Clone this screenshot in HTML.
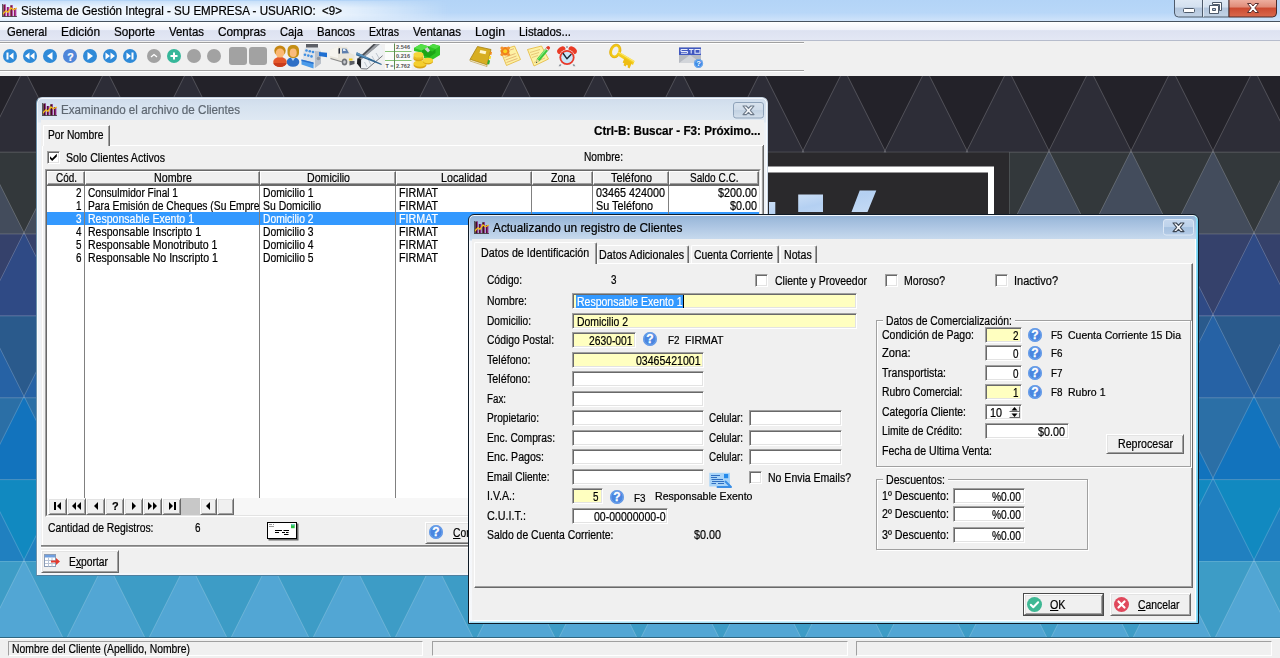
<!DOCTYPE html>
<html lang="es"><head><meta charset="utf-8"><title>Sistema de Gestión Integral</title>
<style>
html,body{margin:0;padding:0;background:#f0f0f0;overflow:hidden}
#root{position:relative;width:1280px;height:658px;overflow:hidden;background:#f0f0f0;font-family:"Liberation Sans",sans-serif;color:#000}
#root div{position:absolute;box-sizing:border-box}
#root svg{position:absolute;display:block;overflow:visible}
.t{-webkit-text-stroke:.22px currentColor;position:absolute;white-space:pre;transform-origin:0 0;font-family:"Liberation Sans",sans-serif;color:#000}
.t u{text-decoration:underline;text-underline-offset:1px}
.sunk{border:1px solid;border-color:#a0a0a0 #fff #fff #a0a0a0;box-shadow:inset 1px 1px 0 #696969,inset -1px -1px 0 #e3e3e3;background:#fff}
.yel{background:#ffffc0}
.btn{border:1px solid;border-color:#fff #696969 #696969 #fff;box-shadow:inset 1px 1px 0 #e3e3e3,inset -1px -1px 0 #a0a0a0;background:#f0f0f0}
.chk{border:1px solid;border-color:#a0a0a0 #fff #fff #a0a0a0;box-shadow:inset 1px 1px 0 #696969,inset -1px -1px 0 #e3e3e3;background:#fff}
.hdr{border:1px solid;border-color:#fff #696969 #696969 #fff;box-shadow:inset -1px -1px 0 #a0a0a0;background:#f0f0f0}
.grp{border:1px solid #a0a0a0;box-shadow:1px 1px 0 #fff,inset 1px 1px 0 #fff}

</style></head><body>
<div id="root">
<svg width="1280" height="562" viewBox="0 76 1280 562" style="left:0;top:76px"><rect x="0" y="76" width="1280" height="562" fill="#232229"/><rect x="0" y="70.5" width="1280" height="82.3" fill="#232229"/><clipPath id="bc0"><rect x="0" y="70.5" width="1280" height="81.8"/></clipPath><path d="M-58.0 68.9L-16.2 152.3H-99.8ZM24.0 68.9L65.8 152.3H-17.8ZM106.0 68.9L147.8 152.3H64.2ZM188.0 68.9L229.8 152.3H146.2ZM270.0 68.9L311.8 152.3H228.2ZM352.0 68.9L393.8 152.3H310.2ZM434.0 68.9L475.8 152.3H392.2ZM516.0 68.9L557.8 152.3H474.2ZM598.0 68.9L639.8 152.3H556.2ZM680.0 68.9L721.8 152.3H638.2ZM762.0 68.9L803.8 152.3H720.2ZM844.0 68.9L885.8 152.3H802.2ZM926.0 68.9L967.8 152.3H884.2ZM1008.0 68.9L1049.8 152.3H966.2ZM1090.0 68.9L1131.8 152.3H1048.2ZM1172.0 68.9L1213.8 152.3H1130.2ZM1254.0 68.9L1295.8 152.3H1212.2Z" fill="#2d2d37" clip-path="url(#bc0)"/><rect x="0" y="152.3" width="1280" height="82.3" fill="#33383b"/><clipPath id="bc1"><rect x="0" y="152.3" width="1280" height="81.8"/></clipPath><path d="M-17.0 150.7L24.8 234.2H-58.8ZM65.0 150.7L106.8 234.2H23.2ZM147.0 150.7L188.8 234.2H105.2ZM229.0 150.7L270.8 234.2H187.2ZM311.0 150.7L352.8 234.2H269.2ZM393.0 150.7L434.8 234.2H351.2ZM475.0 150.7L516.8 234.2H433.2ZM557.0 150.7L598.8 234.2H515.2ZM639.0 150.7L680.8 234.2H597.2ZM721.0 150.7L762.8 234.2H679.2ZM803.0 150.7L844.8 234.2H761.2ZM885.0 150.7L926.8 234.2H843.2ZM967.0 150.7L1008.8 234.2H925.2ZM1049.0 150.7L1090.8 234.2H1007.2ZM1131.0 150.7L1172.8 234.2H1089.2ZM1213.0 150.7L1254.8 234.2H1171.2ZM1295.0 150.7L1336.8 234.2H1253.2Z" fill="#434c5c" clip-path="url(#bc1)"/><rect x="0" y="234.1" width="1280" height="82.3" fill="#35416b"/><clipPath id="bc2"><rect x="0" y="234.1" width="1280" height="81.8"/></clipPath><path d="M-58.0 232.5L-16.2 316.0H-99.8ZM24.0 232.5L65.8 316.0H-17.8ZM106.0 232.5L147.8 316.0H64.2ZM188.0 232.5L229.8 316.0H146.2ZM270.0 232.5L311.8 316.0H228.2ZM352.0 232.5L393.8 316.0H310.2ZM434.0 232.5L475.8 316.0H392.2ZM516.0 232.5L557.8 316.0H474.2ZM598.0 232.5L639.8 316.0H556.2ZM680.0 232.5L721.8 316.0H638.2ZM762.0 232.5L803.8 316.0H720.2ZM844.0 232.5L885.8 316.0H802.2ZM926.0 232.5L967.8 316.0H884.2ZM1008.0 232.5L1049.8 316.0H966.2ZM1090.0 232.5L1131.8 316.0H1048.2ZM1172.0 232.5L1213.8 316.0H1130.2ZM1254.0 232.5L1295.8 316.0H1212.2Z" fill="#2f4a85" clip-path="url(#bc2)"/><rect x="0" y="316.0" width="1280" height="82.3" fill="#2a5a8c"/><clipPath id="bc3"><rect x="0" y="316.0" width="1280" height="81.8"/></clipPath><path d="M-17.0 314.4L24.8 397.9H-58.8ZM65.0 314.4L106.8 397.9H23.2ZM147.0 314.4L188.8 397.9H105.2ZM229.0 314.4L270.8 397.9H187.2ZM311.0 314.4L352.8 397.9H269.2ZM393.0 314.4L434.8 397.9H351.2ZM475.0 314.4L516.8 397.9H433.2ZM557.0 314.4L598.8 397.9H515.2ZM639.0 314.4L680.8 397.9H597.2ZM721.0 314.4L762.8 397.9H679.2ZM803.0 314.4L844.8 397.9H761.2ZM885.0 314.4L926.8 397.9H843.2ZM967.0 314.4L1008.8 397.9H925.2ZM1049.0 314.4L1090.8 397.9H1007.2ZM1131.0 314.4L1172.8 397.9H1089.2ZM1213.0 314.4L1254.8 397.9H1171.2ZM1295.0 314.4L1336.8 397.9H1253.2Z" fill="#2662a5" clip-path="url(#bc3)"/><rect x="0" y="397.8" width="1280" height="82.3" fill="#2b6fa6"/><clipPath id="bc4"><rect x="0" y="397.8" width="1280" height="81.8"/></clipPath><path d="M-58.0 396.2L-16.2 479.7H-99.8ZM24.0 396.2L65.8 479.7H-17.8ZM106.0 396.2L147.8 479.7H64.2ZM188.0 396.2L229.8 479.7H146.2ZM270.0 396.2L311.8 479.7H228.2ZM352.0 396.2L393.8 479.7H310.2ZM434.0 396.2L475.8 479.7H392.2ZM516.0 396.2L557.8 479.7H474.2ZM598.0 396.2L639.8 479.7H556.2ZM680.0 396.2L721.8 479.7H638.2ZM762.0 396.2L803.8 479.7H720.2ZM844.0 396.2L885.8 479.7H802.2ZM926.0 396.2L967.8 479.7H884.2ZM1008.0 396.2L1049.8 479.7H966.2ZM1090.0 396.2L1131.8 479.7H1048.2ZM1172.0 396.2L1213.8 479.7H1130.2ZM1254.0 396.2L1295.8 479.7H1212.2Z" fill="#1273bd" clip-path="url(#bc4)"/><rect x="0" y="479.7" width="1280" height="82.3" fill="#1189c0"/><clipPath id="bc5"><rect x="0" y="479.7" width="1280" height="81.8"/></clipPath><path d="M-17.0 478.1L24.8 561.5H-58.8ZM65.0 478.1L106.8 561.5H23.2ZM147.0 478.1L188.8 561.5H105.2ZM229.0 478.1L270.8 561.5H187.2ZM311.0 478.1L352.8 561.5H269.2ZM393.0 478.1L434.8 561.5H351.2ZM475.0 478.1L516.8 561.5H433.2ZM557.0 478.1L598.8 561.5H515.2ZM639.0 478.1L680.8 561.5H597.2ZM721.0 478.1L762.8 561.5H679.2ZM803.0 478.1L844.8 561.5H761.2ZM885.0 478.1L926.8 561.5H843.2ZM967.0 478.1L1008.8 561.5H925.2ZM1049.0 478.1L1090.8 561.5H1007.2ZM1131.0 478.1L1172.8 561.5H1089.2ZM1213.0 478.1L1254.8 561.5H1171.2ZM1295.0 478.1L1336.8 561.5H1253.2Z" fill="#2080c0" clip-path="url(#bc5)"/><rect x="0" y="561.5" width="1280" height="82.3" fill="#3d9cc6"/><clipPath id="bc6"><rect x="0" y="561.5" width="1280" height="81.8"/></clipPath><path d="M-58.0 559.9L-16.2 643.4H-99.8ZM24.0 559.9L65.8 643.4H-17.8ZM106.0 559.9L147.8 643.4H64.2ZM188.0 559.9L229.8 643.4H146.2ZM270.0 559.9L311.8 643.4H228.2ZM352.0 559.9L393.8 643.4H310.2ZM434.0 559.9L475.8 643.4H392.2ZM516.0 559.9L557.8 643.4H474.2ZM598.0 559.9L639.8 643.4H556.2ZM680.0 559.9L721.8 643.4H638.2ZM762.0 559.9L803.8 643.4H720.2ZM844.0 559.9L885.8 643.4H802.2ZM926.0 559.9L967.8 643.4H884.2ZM1008.0 559.9L1049.8 643.4H966.2ZM1090.0 559.9L1131.8 643.4H1048.2ZM1172.0 559.9L1213.8 643.4H1130.2ZM1254.0 559.9L1295.8 643.4H1212.2Z" fill="#52a6d4" clip-path="url(#bc6)"/><path d="M-58.0 68.9L-16.2 152.3H-99.8ZM24.0 68.9L65.8 152.3H-17.8ZM106.0 68.9L147.8 152.3H64.2ZM188.0 68.9L229.8 152.3H146.2ZM270.0 68.9L311.8 152.3H228.2ZM352.0 68.9L393.8 152.3H310.2ZM434.0 68.9L475.8 152.3H392.2ZM516.0 68.9L557.8 152.3H474.2ZM598.0 68.9L639.8 152.3H556.2ZM680.0 68.9L721.8 152.3H638.2ZM762.0 68.9L803.8 152.3H720.2ZM844.0 68.9L885.8 152.3H802.2ZM926.0 68.9L967.8 152.3H884.2ZM1008.0 68.9L1049.8 152.3H966.2ZM1090.0 68.9L1131.8 152.3H1048.2ZM1172.0 68.9L1213.8 152.3H1130.2ZM1254.0 68.9L1295.8 152.3H1212.2Z" fill="none" stroke="#fff" stroke-opacity=".2" stroke-width="1" clip-path="url(#bc0)"/><path d="M-17.0 150.7L24.8 234.2H-58.8ZM65.0 150.7L106.8 234.2H23.2ZM147.0 150.7L188.8 234.2H105.2ZM229.0 150.7L270.8 234.2H187.2ZM311.0 150.7L352.8 234.2H269.2ZM393.0 150.7L434.8 234.2H351.2ZM475.0 150.7L516.8 234.2H433.2ZM557.0 150.7L598.8 234.2H515.2ZM639.0 150.7L680.8 234.2H597.2ZM721.0 150.7L762.8 234.2H679.2ZM803.0 150.7L844.8 234.2H761.2ZM885.0 150.7L926.8 234.2H843.2ZM967.0 150.7L1008.8 234.2H925.2ZM1049.0 150.7L1090.8 234.2H1007.2ZM1131.0 150.7L1172.8 234.2H1089.2ZM1213.0 150.7L1254.8 234.2H1171.2ZM1295.0 150.7L1336.8 234.2H1253.2Z" fill="none" stroke="#fff" stroke-opacity=".2" stroke-width="1" clip-path="url(#bc1)"/><path d="M-58.0 232.5L-16.2 316.0H-99.8ZM24.0 232.5L65.8 316.0H-17.8ZM106.0 232.5L147.8 316.0H64.2ZM188.0 232.5L229.8 316.0H146.2ZM270.0 232.5L311.8 316.0H228.2ZM352.0 232.5L393.8 316.0H310.2ZM434.0 232.5L475.8 316.0H392.2ZM516.0 232.5L557.8 316.0H474.2ZM598.0 232.5L639.8 316.0H556.2ZM680.0 232.5L721.8 316.0H638.2ZM762.0 232.5L803.8 316.0H720.2ZM844.0 232.5L885.8 316.0H802.2ZM926.0 232.5L967.8 316.0H884.2ZM1008.0 232.5L1049.8 316.0H966.2ZM1090.0 232.5L1131.8 316.0H1048.2ZM1172.0 232.5L1213.8 316.0H1130.2ZM1254.0 232.5L1295.8 316.0H1212.2Z" fill="none" stroke="#fff" stroke-opacity=".2" stroke-width="1" clip-path="url(#bc2)"/><path d="M-17.0 314.4L24.8 397.9H-58.8ZM65.0 314.4L106.8 397.9H23.2ZM147.0 314.4L188.8 397.9H105.2ZM229.0 314.4L270.8 397.9H187.2ZM311.0 314.4L352.8 397.9H269.2ZM393.0 314.4L434.8 397.9H351.2ZM475.0 314.4L516.8 397.9H433.2ZM557.0 314.4L598.8 397.9H515.2ZM639.0 314.4L680.8 397.9H597.2ZM721.0 314.4L762.8 397.9H679.2ZM803.0 314.4L844.8 397.9H761.2ZM885.0 314.4L926.8 397.9H843.2ZM967.0 314.4L1008.8 397.9H925.2ZM1049.0 314.4L1090.8 397.9H1007.2ZM1131.0 314.4L1172.8 397.9H1089.2ZM1213.0 314.4L1254.8 397.9H1171.2ZM1295.0 314.4L1336.8 397.9H1253.2Z" fill="none" stroke="#fff" stroke-opacity=".2" stroke-width="1" clip-path="url(#bc3)"/><path d="M-58.0 396.2L-16.2 479.7H-99.8ZM24.0 396.2L65.8 479.7H-17.8ZM106.0 396.2L147.8 479.7H64.2ZM188.0 396.2L229.8 479.7H146.2ZM270.0 396.2L311.8 479.7H228.2ZM352.0 396.2L393.8 479.7H310.2ZM434.0 396.2L475.8 479.7H392.2ZM516.0 396.2L557.8 479.7H474.2ZM598.0 396.2L639.8 479.7H556.2ZM680.0 396.2L721.8 479.7H638.2ZM762.0 396.2L803.8 479.7H720.2ZM844.0 396.2L885.8 479.7H802.2ZM926.0 396.2L967.8 479.7H884.2ZM1008.0 396.2L1049.8 479.7H966.2ZM1090.0 396.2L1131.8 479.7H1048.2ZM1172.0 396.2L1213.8 479.7H1130.2ZM1254.0 396.2L1295.8 479.7H1212.2Z" fill="none" stroke="#fff" stroke-opacity=".2" stroke-width="1" clip-path="url(#bc4)"/><path d="M-17.0 478.1L24.8 561.5H-58.8ZM65.0 478.1L106.8 561.5H23.2ZM147.0 478.1L188.8 561.5H105.2ZM229.0 478.1L270.8 561.5H187.2ZM311.0 478.1L352.8 561.5H269.2ZM393.0 478.1L434.8 561.5H351.2ZM475.0 478.1L516.8 561.5H433.2ZM557.0 478.1L598.8 561.5H515.2ZM639.0 478.1L680.8 561.5H597.2ZM721.0 478.1L762.8 561.5H679.2ZM803.0 478.1L844.8 561.5H761.2ZM885.0 478.1L926.8 561.5H843.2ZM967.0 478.1L1008.8 561.5H925.2ZM1049.0 478.1L1090.8 561.5H1007.2ZM1131.0 478.1L1172.8 561.5H1089.2ZM1213.0 478.1L1254.8 561.5H1171.2ZM1295.0 478.1L1336.8 561.5H1253.2Z" fill="none" stroke="#fff" stroke-opacity=".2" stroke-width="1" clip-path="url(#bc5)"/><path d="M-58.0 559.9L-16.2 643.4H-99.8ZM24.0 559.9L65.8 643.4H-17.8ZM106.0 559.9L147.8 643.4H64.2ZM188.0 559.9L229.8 643.4H146.2ZM270.0 559.9L311.8 643.4H228.2ZM352.0 559.9L393.8 643.4H310.2ZM434.0 559.9L475.8 643.4H392.2ZM516.0 559.9L557.8 643.4H474.2ZM598.0 559.9L639.8 643.4H556.2ZM680.0 559.9L721.8 643.4H638.2ZM762.0 559.9L803.8 643.4H720.2ZM844.0 559.9L885.8 643.4H802.2ZM926.0 559.9L967.8 643.4H884.2ZM1008.0 559.9L1049.8 643.4H966.2ZM1090.0 559.9L1131.8 643.4H1048.2ZM1172.0 559.9L1213.8 643.4H1130.2ZM1254.0 559.9L1295.8 643.4H1212.2Z" fill="none" stroke="#fff" stroke-opacity=".2" stroke-width="1" clip-path="url(#bc6)"/><path d="M0 152.3H1280M0 234.2H1280M0 316.0H1280M0 397.9H1280M0 479.7H1280M0 561.5H1280M0 643.4H1280" fill="none" stroke="#fff" stroke-opacity=".14" stroke-width="1"/><rect x="700" y="152.500" width="309" height="330" fill="#2a292c"/><path d="M1009.500 152.500v330" stroke="#fff" stroke-opacity=".12"/><rect x="740" y="169.5" width="251" height="290" fill="#2a292c" stroke="#fff" stroke-width="6"/><linearGradient id="lg1" x1="0" y1="0" x2="1" y2="1"><stop offset="0" stop-color="#dbe8f8"/><stop offset=".5" stop-color="#b4d0f2"/><stop offset="1" stop-color="#c9ddf5"/></linearGradient><path d="M769 202h6.300v14H769zM798.200 194.500H823V212h-24.800zM859.700 190.400h16.600L867.500 212h-16z" fill="url(#lg1)"/></svg>
<div style="left:0px;top:0px;width:1280px;height:21px;background:linear-gradient(#b3d4f7 0,#b8d7f8 60%,#cfe3fa 100%)"></div>
<div style="left:0px;top:1px;width:460px;height:20px;background:linear-gradient(90deg,rgba(255,255,255,.78) 0,rgba(255,255,255,.74) 330px,rgba(255,255,255,0) 450px);-webkit-mask-image:linear-gradient(rgba(0,0,0,.35),#000 35%,#000 70%,rgba(0,0,0,.5));mask-image:linear-gradient(rgba(0,0,0,.35),#000 35%,#000 70%,rgba(0,0,0,.5))"></div>
<div style="left:0px;top:21px;width:1280px;height:1px;background:#46525f"></div>
<svg width="15" height="13" viewBox="0 0 15 13" style="left:1.5px;top:4px">
<path d="M1.300 .5h2.400v12H1.300zM8.300 1.300h2.400v11.200H8.300z" fill="#6d1230"/><path d="M4.800 3h2.400v9.500H4.800zM11.800 4h2.400v8.500h-2.400z" fill="#8f1f5c"/>
<path d="M2.900 .5h.8v12h-.8zM6.400 3h.8v9.500h-.8zM9.900 1.300h.8v11.200h-.8zM13.400 4h.8v8.500h-.8z" fill="#c64fd0"/>
<path d="M.3 10.500L4 6.800l2 1.500 3-4.300 2.500 1.800L14.700 4" fill="none" stroke="#f6c21a" stroke-width="1.300"/><path d="M0 12.500h15M.5 0v12.500" stroke="#3a3a3a" stroke-width="1" stroke-opacity=".8"/></svg>
<span class="t" style="left:21.00px;top:3.64px;font-size:12.4px;line-height:14px;transform:scaleX(0.9341);">Sistema de Gestión Integral - SU EMPRESA - USUARIO:  &lt;9&gt;</span>
<svg width="106" height="20" viewBox="0 0 106 20" style="left:1173px;top:0">
<defs><linearGradient id="cb" x1="0" y1="0" x2="0" y2="1"><stop offset="0" stop-color="#dfe9f5"/><stop offset=".45" stop-color="#d3e0ef"/><stop offset=".5" stop-color="#b3c6dd"/><stop offset="1" stop-color="#c3d3e6"/></linearGradient>
<linearGradient id="cr" x1="0" y1="0" x2="0" y2="1"><stop offset="0" stop-color="#efb3a5"/><stop offset=".45" stop-color="#e08b78"/><stop offset=".5" stop-color="#cc4a31"/><stop offset="1" stop-color="#d9694f"/></linearGradient></defs>
<path d="M1.5 -1V13a4 4 0 0 0 4 4H56V-1z" fill="url(#cb)" stroke="#4d5a6b"/>
<path d="M56 -1V17H99.500a4 4 0 0 0 4-4V-1z" fill="url(#cr)" stroke="#4a2a2a"/>
<path d="M29.500 0V17" stroke="#4d5a6b"/><path d="M30.500 0V17" stroke="#eef3f9" stroke-opacity=".7"/>
<rect x="10.500" y="8.500" width="11" height="4" rx="1" fill="#fff" stroke="#4d5a6b"/>
<path d="M39.500 2.500h9v8h-2v-6h-7z" fill="#fff" stroke="#4d5a6b"/><path d="M36.500 5.500h9v8h-9z M39.500 8.500v2h3v-2z" fill="#fff" fill-rule="evenodd" stroke="#4d5a6b"/>
<path d="M74.500 3.500h3.500l2 2.500 2-2.500h3.500l-3.700 4.500 3.700 4.500h-3.500l-2-2.500-2 2.500h-3.500l3.700-4.500z" fill="#fff" stroke="#5a3030" stroke-width="1"/>
</svg>
<div style="left:0px;top:22px;width:1280px;height:18px;background:linear-gradient(#ffffff 0,#f1f3fa 42%,#dde2f1 48%,#e3e7f4 100%)"></div>
<div style="left:0px;top:40px;width:1280px;height:1px;background:#b6bccc"></div>
<span class="t" style="left:7.00px;top:24.64px;font-size:12.4px;line-height:14px;transform:scaleX(0.9072);">General</span>
<span class="t" style="left:61.00px;top:24.64px;font-size:12.4px;line-height:14px;transform:scaleX(0.9596);">Edición</span>
<span class="t" style="left:114.00px;top:24.64px;font-size:12.4px;line-height:14px;transform:scaleX(0.9446);">Soporte</span>
<span class="t" style="left:169.00px;top:24.64px;font-size:12.4px;line-height:14px;transform:scaleX(0.9233);">Ventas</span>
<span class="t" style="left:218.00px;top:24.64px;font-size:12.4px;line-height:14px;transform:scaleX(0.9549);">Compras</span>
<span class="t" style="left:280.00px;top:24.64px;font-size:12.4px;line-height:14px;transform:scaleX(0.9025);">Caja</span>
<span class="t" style="left:317.00px;top:24.64px;font-size:12.4px;line-height:14px;transform:scaleX(0.9191);">Bancos</span>
<span class="t" style="left:369.00px;top:24.64px;font-size:12.4px;line-height:14px;transform:scaleX(0.8541);">Extras</span>
<span class="t" style="left:413.00px;top:24.64px;font-size:12.4px;line-height:14px;transform:scaleX(0.9287);">Ventanas</span>
<span class="t" style="left:475.00px;top:24.64px;font-size:12.4px;line-height:14px;transform:scaleX(0.9892);">Login</span>
<span class="t" style="left:519.00px;top:24.64px;font-size:12.4px;line-height:14px;transform:scaleX(0.9206);">Listados...</span>
<div style="left:0px;top:41px;width:1280px;height:35px;background:#f0f0f0"></div>
<div style="left:0px;top:42px;width:804px;height:1px;background:#a0a0a0"></div>
<div style="left:0px;top:43px;width:804px;height:1px;background:#fff"></div>
<div style="left:0px;top:70px;width:804px;height:1px;background:#a0a0a0"></div>
<div style="left:0px;top:71px;width:804px;height:1px;background:#fff"></div>
<svg width="804" height="28" viewBox="0 43 804 28" style="left:0;top:43px"><circle cx="10" cy="56" r="7" fill="#2f8ad8"/><path d="M6.500 52.500h2v7h-2zM13.500 52.500v7l-4.500-3.500z" fill="#fff"/><circle cx="30" cy="56" r="7" fill="#2f8ad8"/><path d="M29.500 52.500v7l-4.500-3.500zM34.500 52.500v7l-4.500-3.500z" fill="#fff"/><circle cx="50" cy="56" r="7" fill="#2f8ad8"/><path d="M52.500 52v8l-5.500-4z" fill="#fff"/><circle cx="70" cy="56" r="7" fill="#4f86d9"/><circle cx="90" cy="56" r="7" fill="#2f8ad8"/><path d="M87.500 52v8l5.500-4z" fill="#fff"/><circle cx="110" cy="56" r="7" fill="#2f8ad8"/><path d="M105.500 52.500v7l4.500-3.500zM110.500 52.500v7l4.500-3.500z" fill="#fff"/><circle cx="130" cy="56" r="7" fill="#2f8ad8"/><path d="M131.500 52.500h2v7h-2zM126.500 52.500v7l4.500-3.500z" fill="#fff"/><circle cx="154" cy="56" r="7" fill="#a2a2a2"/><path d="M151 57l3-2.500 3 2.500" fill="none" stroke="#fff" stroke-width="1.3"/><circle cx="174" cy="56" r="7" fill="#36b79a"/><path d="M170.500 56h7M174 52.500v7" stroke="#fff" stroke-width="2"/><circle cx="194" cy="56" r="7" fill="#a2a2a2"/><circle cx="214" cy="56" r="7" fill="#a2a2a2"/><rect x="229" y="47" width="18" height="18" rx="3" fill="#a2a2a2"/><rect x="249" y="47" width="18" height="18" rx="3" fill="#a2a2a2"/><g>
<ellipse cx="280" cy="62" rx="6.800" ry="5" fill="#e4572a"/><path d="M273.500 63a6.500 4 0 0 0 13 0z" fill="#c93c1c"/>
<ellipse cx="280" cy="50.800" rx="5.700" ry="5.400" fill="#c58612"/><ellipse cx="280" cy="53" rx="4.300" ry="4.500" fill="#fbb872"/>
<ellipse cx="293" cy="62" rx="6.300" ry="4.800" fill="#2e6fc6"/><path d="M291 58l2 3 2-3z" fill="#b5d6f5"/>
<rect x="287.500" y="45" width="11.500" height="13" rx="5" fill="#c58f14"/><ellipse cx="293.200" cy="52.800" rx="3.500" ry="4.300" fill="#fbbc7c"/>
</g><g>
<path d="M306 44h12v4h-12z" fill="#5c5f66"/><path d="M305 47.500h14l2 4v12l-6 4.500-12-4v-11z" fill="#dfe3e8"/><path d="M315 51l6 .5v12l-6 4.500z" fill="#b9bfc8"/>
<g fill="#3f8fe2"><circle cx="306.500" cy="50.500" r="1.300"/><circle cx="309.800" cy="51.300" r="1.300"/><circle cx="313" cy="52" r="1.300"/><circle cx="305" cy="54.800" r="1.300"/><circle cx="308.300" cy="55.600" r="1.300"/><circle cx="311.500" cy="56.400" r="1.300"/></g>
<path d="M301.500 59.500l12 3v6l-12-4z" fill="#4b9bea"/><path d="M301.500 59.500l12 3v1.500l-12-3z" fill="#2a70cc"/>
<path d="M319 52l8 .8v4.500l-8-1.200z" fill="#1f6fd2"/><circle cx="318.500" cy="58.500" r="1.800" fill="#8d949e"/>
</g><g>
<path d="M330 50l8-3.500 9 .5 3 6 4.500 2v7l-5 2-19.500-5.500z" fill="#e9e6dc"/><path d="M330 50l8-3.500v11.500l-8-2z" fill="#f6f4ee"/>
<path d="M338.500 48.500l1.500-.5v5.500l-1.500.3z" fill="#2a2f3a"/><path d="M342 48.500l4.500.3 2.500 4.500-7 .2z" fill="#5d7fae"/><path d="M343 49l2 .1 1 1.800-3 .1z" fill="#dce9f7"/>
<path d="M330.500 58.500l12 3.500" stroke="#8a8a8a" stroke-width="1.200"/>
<ellipse cx="344.500" cy="62" rx="2.800" ry="3.600" fill="#6f7278"/><ellipse cx="344.500" cy="62" rx="1.300" ry="1.800" fill="#c9ccd1"/>
<path d="M349 58.500h3.500v2h-3.500z" fill="#f2cf1d"/><path d="M349.500 61h5v3l-5 1.500z" fill="#5b5e66"/>
</g><g>
<path d="M373.500 44l6.400.3 3.100 5.500-.4 5.900L367 69l-5.900-.3-4.100-5.200.3-6z" fill="#e6eaee"/>
<path d="M373.500 44l6.400.3-18.600 15.500-4-.8z" fill="#4a4d52"/><path d="M376 44.100l3.900.2-18.600 15.500-2-.4z" fill="#9a9ea4"/>
<path d="M357.300 58.500l4 .8-.2 9.400-4.100-5.200z" fill="#1e1f22"/>
<path d="M361.300 59.800l18.600-15.500 3.100 5.500-.4 5.900L367 69l-5.900-.3z" fill="#eef1f4"/>
<path d="M364.500 62l2.500 5M368 59l2.800 5.500M372 56l3 5.500M376 53l3 5" stroke="#b7bfc9" stroke-width=".9"/>
<path d="M361.100 68.700L367 69l15.600-13.300" fill="none" stroke="#55595f" stroke-width=".8"/>
<path d="M356.800 52.300l25 11.700-.4.900-25.400-9.700z" fill="#2f6591"/><path d="M356.800 52.300l12 5.600-.5 1-11.900-4.600z" fill="#5d93bd"/>
</g><g><rect x="385" y="43.500" width="26.500" height="26" fill="#fbfcfb"/>
<path d="M385 51.500h26.500M385 60.500h26.500" stroke="#86c274" stroke-width="1"/><path d="M394.500 43.500v26" stroke="#5d8c52" stroke-width="1"/>
<g font-family="Liberation Sans, sans-serif" font-size="5.600" font-weight="bold" fill="#555">
<text x="396" y="49.300" textLength="14" lengthAdjust="spacingAndGlyphs">2.546</text>
<text x="396" y="58.300" textLength="14" lengthAdjust="spacingAndGlyphs">0.216</text>
<text x="396" y="67.500" textLength="14" lengthAdjust="spacingAndGlyphs">2.762</text>
<text x="385.500" y="67.500" textLength="8" lengthAdjust="spacingAndGlyphs">T =</text></g></g><g>
<path d="M414 48l7-4 8 2.500 4-2.500 7 2v9l-9 5.500-7-2.500v-5l-10-2z" fill="#2fc524"/><path d="M414 48l7-4 8 2.500-7 4z" fill="#55e048"/><path d="M429 46.500l4-2.500 7 2-4.500 3z" fill="#4fdc42"/>
<path d="M422 50.500l7-4v4l3.500 1 3-2.500v4l-6.500 4.500-7-2.500z" fill="#1da516"/><path d="M424.500 49l3-2 2.500 3.500-2 2z" fill="#cfd4d0"/>
<ellipse cx="420" cy="65" rx="6.500" ry="3.500" fill="#d9a514"/><ellipse cx="420" cy="63.500" rx="6.500" ry="3.300" fill="#f4cf2e"/>
<ellipse cx="428" cy="61.500" rx="5" ry="3" fill="#d9a514"/><ellipse cx="428" cy="60.500" rx="5" ry="2.800" fill="#f6d53a"/>
<ellipse cx="418.500" cy="58.500" rx="5" ry="2.800" fill="#d9a514"/><ellipse cx="418.500" cy="57" rx="5" ry="2.800" fill="#e9bd22"/><ellipse cx="418.500" cy="54.800" rx="5" ry="2.800" fill="#f6d53a"/>
</g><g>
<path d="M470 59.500l7.500-13 13.500 3-4 15.500z" fill="#d7ae22" stroke="#a57f10" stroke-width=".8"/><path d="M470 59.500l17 5.500v1.500l-17-5.500z" fill="#fff8e0" stroke="#a57f10" stroke-width=".5"/>
<path d="M480.300 50l6 1.300-.8 3-6-1.300z" fill="#fff6cf"/>
<path d="M490.200 51.500l1.800.5-.7 3-1.800-.5z" fill="#f08a1c"/><path d="M489.300 55.800l1.800.5-.7 3-1.800-.5z" fill="#f4dd1b"/><path d="M488.200 60l1.900.5-1 4-1.900-.5z" fill="#2fae2f"/>
</g><g>
<path d="M500.500 50.500l14-4.500 6 13.500-14 6z" fill="#fdf1a4" stroke="#e3b63a" stroke-width=".8"/>
<path d="M504.500 57.500l11-4M505.500 60l11-4M506.500 62.500l11-4" stroke="#e6b877" stroke-width="1"/><path d="M510 50l4-1.300" stroke="#e6b877" stroke-width="1"/>
<circle cx="505.200" cy="51.200" r="4.300" fill="#ef7d1c"/><g fill="#f4932e"><circle cx="502" cy="48" r="1.600"/><circle cx="508.500" cy="48" r="1.600"/><circle cx="502" cy="54.500" r="1.600"/><circle cx="508.500" cy="54.500" r="1.600"/></g><circle cx="505.200" cy="51.200" r="2" fill="#fbd21d"/>
</g><g>
<path d="M527.500 49.500l14-3.500 7 13-14.500 7z" fill="#fdf1a4" stroke="#e3b63a" stroke-width=".8"/>
<path d="M530 52.500l10-3M531 55l8-2.500M532 57.500l6-2M534 62.500l11-4.500" stroke="#e6c777" stroke-width="1"/>
<path d="M546.300 47.500l2.800 2-9.500 11.500-3.600 2 .8-4z" fill="#3cc83c"/><path d="M546.300 47.500l1.200.9-9.700 11.600-1 .3z" fill="#8cea84"/>
<path d="M545.300 48.700l1.800-2.200a1.800 1.800 0 0 1 2.800 2.100l-1.800 2.200z" fill="#e03a2a"/><path d="M545.300 48.700l.7-.8 2.800 2.100-.7.800z" fill="#f4f4f4"/>
<path d="M536.800 59l2.800 2-3.600 2z" fill="#f3cf96"/><path d="M536.300 61.800l1 .7-1.400.7z" fill="#333"/>
</g><g>
<ellipse cx="561.300" cy="50.300" rx="4.600" ry="3.200" transform="rotate(-40 561.300 50.300)" fill="#ea3b25"/><ellipse cx="572.700" cy="50.300" rx="4.600" ry="3.200" transform="rotate(40 572.700 50.300)" fill="#ea3b25"/>
<path d="M566 46h2v2h-2z" fill="#a9adb3"/><path d="M560 64l-1.500 2.200h2l1-1.500zM574 64l1.500 2.200h-2l-1-1.500z" fill="#8f959c"/>
<circle cx="567" cy="57.500" r="8" fill="#f2f2f2"/><circle cx="567" cy="57.500" r="7.600" fill="#e8392a"/><circle cx="567" cy="57.500" r="5.800" fill="#c9e6f9"/>
<path d="M563.200 53.500l3.800 5.300 4-4.300" fill="none" stroke="#1d2733" stroke-width="1.400" stroke-linecap="round" stroke-linejoin="round"/>
</g><g>
<ellipse cx="615.300" cy="51" rx="4.300" ry="6" transform="rotate(22 615.300 51)" fill="none" stroke="#f1c716" stroke-width="2.600"/><ellipse cx="615.300" cy="51" rx="5.400" ry="7.100" transform="rotate(22 615.300 51)" fill="none" stroke="#d9a40c" stroke-width=".5"/>
<path d="M618.500 51.500l16 9.500-1.500 4-16-10z" fill="#f4cd1c"/><path d="M618.500 51.500l16 9.500-.5 1.300-16-9.700z" fill="#fbe66a"/>
<path d="M624.500 58l7.500 4.500-2.500 6-2-1.200.6-1.600-1.600-.9-.8 1.700-2.200-1.300.8-1.800-1.600-.9z" fill="#eebd12"/>
</g><g>
<rect x="679" y="47.500" width="22" height="15.500" fill="#b7bbc2"/><path d="M679 63l11-8 11 8z" fill="#d2d5da"/><rect x="679" y="47.500" width="22" height="7.500" fill="#4158c0"/>
<path d="M681 49.500h6.500M681 51.500h6.500M681 53.300h6.500M687.500 51.500v1.800M681 49.500v2M689 49.500h4.500M691.200 49.500v4M695 49.500h5v3.800h-5z" fill="none" stroke="#e6ebfb" stroke-width="1.100"/>
<circle cx="698.500" cy="63.500" r="4.600" fill="#3f8be6"/><circle cx="698.500" cy="63.500" r="4" fill="none" stroke="#9cc4f4" stroke-width=".6"/>
<text x="698.500" y="66.300" text-anchor="middle" font-family="Liberation Sans, sans-serif" font-weight="bold" font-size="7.500" fill="#fff">?</text>
</g></svg><span class="t" style="left:67.200px;top:50.500px;font-size:10.5px;line-height:12px;font-weight:bold;color:#fff">?</span>
<div style="left:0px;top:637px;width:1280px;height:21px;background:#f0f0f0;border-top:1px solid #2f6680"></div>
<div style="left:0px;top:638px;width:1280px;height:1px;background:#fff"></div>
<div style="left:8px;top:641px;width:415px;height:15px;border:1px solid;border-color:#a0a0a0 #fff #fff #a0a0a0"></div>
<div style="left:432px;top:641px;width:416px;height:15px;border:1px solid;border-color:#a0a0a0 #fff #fff #a0a0a0"></div>
<div style="left:856px;top:641px;width:416px;height:15px;border:1px solid;border-color:#a0a0a0 #fff #fff #a0a0a0"></div>
<span class="t" style="left:11.70px;top:642.14px;font-size:12.5px;line-height:14px;transform:scaleX(0.8291);">Nombre del Cliente (Apellido, Nombre)</span>
<div style="left:36px;top:97px;width:732px;height:479px;background:linear-gradient(#cfdceb 0,#d6e2ef 8px,#e0e9f3 24px,#eef2f7 25px,#f2f5f9 100%);border:1px solid;border-color:#c3d2e2 #c9d6e4 #4f7f9f #6d93ad;border-radius:6px 6px 0 0;box-shadow:inset 0 1px 0 rgba(255,255,255,.8),inset 1px 0 0 rgba(255,255,255,.7),inset -1px 0 0 rgba(255,255,255,.7)"></div>
<div style="left:41px;top:120px;width:723px;height:453px;background:#f0f0f0"></div>
<svg width="15" height="13" viewBox="0 0 15 13" style="left:41.5px;top:102.5px">
<path d="M1.300 .5h2.400v12H1.300zM8.300 1.300h2.400v11.200H8.300z" fill="#3d0a14"/><path d="M4.800 3h2.400v9.500H4.800zM11.800 4h2.400v8.500h-2.400z" fill="#5b1036"/>
<path d="M2.900 .5h.8v12h-.8zM6.400 3h.8v9.500h-.8zM9.900 1.300h.8v11.200h-.8zM13.400 4h.8v8.500h-.8z" fill="#a436b4"/>
<path d="M.3 10.500L4 6.800l2 1.500 3-4.300 2.500 1.800L14.700 4" fill="none" stroke="#f6c21a" stroke-width="1.300"/><path d="M0 12.500h15M.5 0v12.500" stroke="#3a3a3a" stroke-width="1" stroke-opacity=".8"/></svg>
<span class="t" style="left:60.50px;top:103.14px;font-size:12.4px;line-height:14px;transform:scaleX(0.9382);color:#5f6872;">Examinando el archivo de Clientes</span>
<svg width="31" height="17" viewBox="0 0 31 17" style="left:733px;top:102px"><defs><linearGradient id="cbI" x1="0" y1="0" x2="0" y2="1"><stop offset="0" stop-color="#d9e3ee"/><stop offset=".48" stop-color="#cfdbe9"/><stop offset=".52" stop-color="#c2d2e3"/><stop offset="1" stop-color="#d5e0ec"/></linearGradient></defs>
<rect x=".5" y=".5" width="30" height="15.500" rx="2.500" fill="url(#cbI)" stroke="#8fa3ba"/>
<path d="M10 4h3.300l2.200 2.300 2.200-2.300H21l-3.700 4.300 3.700 4.300h-3.300l-2.200-2.300-2.200 2.300H10l3.700-4.300z" fill="#f6f8fb" stroke="#6d7a8a" stroke-width="1.100" stroke-linejoin="round"/></svg>
<div style="left:43px;top:125px;width:67px;height:21px;border-top:1px solid #fff;border-left:1px solid #fff;border-right:1px solid #696969;box-shadow:inset -1px 0 0 #a0a0a0;background:#f0f0f0"></div>
<div style="left:110px;top:145px;width:654px;height:1px;background:#fff"></div>
<div style="left:762px;top:146px;width:1px;height:400px;background:#a0a0a0"></div>
<div style="left:763px;top:145px;width:1px;height:402px;background:#696969"></div>
<div style="left:42px;top:146px;width:1px;height:400px;background:#fff"></div>
<span class="t" style="left:47.50px;top:127.84px;font-size:12.5px;line-height:14px;transform:scaleX(0.8236);">Por Nombre</span>
<span class="t" style="left:593.80px;top:124.14px;font-size:12.5px;line-height:14px;transform:scaleX(0.9328);font-weight:bold;">Ctrl-B: Buscar - F3: Próximo...</span>
<div class="chk" style="left:47px;top:151px;width:13px;height:13px;"></div>
<svg width="9" height="9" viewBox="0 0 9 9" style="left:49px;top:153px"><path d="M1 3.200l2.200 2.200L7.800 .8v2.600L3.200 8 1 5.800z" fill="#000"/></svg>
<span class="t" style="left:65.50px;top:150.84px;font-size:12.5px;line-height:14px;transform:scaleX(0.8481);">Solo Clientes Activos</span>
<span class="t" style="left:584.30px;top:150.44px;font-size:12.5px;line-height:14px;transform:scaleX(0.8136);">Nombre:</span>
<div style="left:45px;top:169px;width:716px;height:348px;border:1px solid;border-color:#a0a0a0 #fff #fff #a0a0a0"></div>
<div style="left:46px;top:170px;width:714px;height:346px;background:#fff;border:1px solid;border-color:#696969 #e3e3e3 #e3e3e3 #696969"></div>
<div style="left:47px;top:171px;width:712px;height:15px;background:#f0f0f0;border-bottom:1px solid #696969"></div>
<div class="hdr" style="left:47px;top:171px;width:38px;height:14px;"></div>
<span class="t" style="left:55.50px;top:171.34px;font-size:12.5px;line-height:14px;transform:scaleX(0.7953);">Cód.</span>
<div class="hdr" style="left:85px;top:171px;width:175px;height:14px;"></div>
<span class="t" style="left:153.50px;top:171.34px;font-size:12.5px;line-height:14px;transform:scaleX(0.8545);">Nombre</span>
<div class="hdr" style="left:260px;top:171px;width:136px;height:14px;"></div>
<span class="t" style="left:306.50px;top:171.34px;font-size:12.5px;line-height:14px;transform:scaleX(0.8481);">Domicilio</span>
<div class="hdr" style="left:396px;top:171px;width:136px;height:14px;"></div>
<span class="t" style="left:441.00px;top:171.34px;font-size:12.5px;line-height:14px;transform:scaleX(0.8596);">Localidad</span>
<div class="hdr" style="left:532px;top:171px;width:61px;height:14px;"></div>
<span class="t" style="left:550.50px;top:171.34px;font-size:12.5px;line-height:14px;transform:scaleX(0.8421);">Zona</span>
<div class="hdr" style="left:593px;top:171px;width:76px;height:14px;"></div>
<span class="t" style="left:610.50px;top:171.34px;font-size:12.5px;line-height:14px;transform:scaleX(0.8674);">Teléfono</span>
<div class="hdr" style="left:669px;top:171px;width:90px;height:14px;"></div>
<span class="t" style="left:689.75px;top:171.34px;font-size:12.5px;line-height:14px;transform:scaleX(0.8023);">Saldo C.C.</span>
<div style="left:84px;top:186px;width:1px;height:312px;background:#808080"></div>
<div style="left:259px;top:186px;width:1px;height:312px;background:#808080"></div>
<div style="left:395px;top:186px;width:1px;height:312px;background:#808080"></div>
<div style="left:531px;top:186px;width:1px;height:312px;background:#808080"></div>
<div style="left:592px;top:186px;width:1px;height:312px;background:#808080"></div>
<div style="left:668px;top:186px;width:1px;height:312px;background:#808080"></div>
<span class="t" style="left:76.20px;top:186.14px;font-size:12.5px;line-height:14px;transform:scaleX(0.7910);">2</span>
<span class="t" style="left:87.50px;top:186.14px;font-size:12.5px;line-height:14px;transform:scaleX(0.8096);">Consulmidor Final 1</span>
<span class="t" style="left:262.70px;top:186.14px;font-size:12.5px;line-height:14px;transform:scaleX(0.8260);">Domicilio 1</span>
<span class="t" style="left:398.50px;top:186.14px;font-size:12.5px;line-height:14px;transform:scaleX(0.8554);">FIRMAT</span>
<span class="t" style="left:595.50px;top:186.14px;font-size:12.5px;line-height:14px;transform:scaleX(0.8630);">03465 424000</span>
<span class="t" style="left:718.00px;top:186.14px;font-size:12.5px;line-height:14px;transform:scaleX(0.8631);">$200.00</span>
<span class="t" style="left:76.20px;top:199.14px;font-size:12.5px;line-height:14px;transform:scaleX(0.7910);">1</span>
<span class="t" style="left:87.50px;top:199.14px;font-size:12.5px;line-height:14px;transform:scaleX(0.8228);">Para Emisión de Cheques (Su Empre</span>
<span class="t" style="left:262.70px;top:199.14px;font-size:12.5px;line-height:14px;transform:scaleX(0.8349);">Su Domicilio</span>
<span class="t" style="left:398.50px;top:199.14px;font-size:12.5px;line-height:14px;transform:scaleX(0.8554);">FIRMAT</span>
<span class="t" style="left:595.50px;top:199.14px;font-size:12.5px;line-height:14px;transform:scaleX(0.8663);">Su Teléfono</span>
<span class="t" style="left:730.00px;top:199.14px;font-size:12.5px;line-height:14px;transform:scaleX(0.8631);">$0.00</span>
<div style="left:47px;top:212px;width:712px;height:13px;background:#3399ff"></div>
<div style="left:84px;top:212px;width:1px;height:13px;background:#808080"></div>
<div style="left:259px;top:212px;width:1px;height:13px;background:#808080"></div>
<div style="left:395px;top:212px;width:1px;height:13px;background:#808080"></div>
<div style="left:531px;top:212px;width:1px;height:13px;background:#808080"></div>
<div style="left:592px;top:212px;width:1px;height:13px;background:#808080"></div>
<div style="left:668px;top:212px;width:1px;height:13px;background:#808080"></div>
<span class="t" style="left:76.20px;top:212.14px;font-size:12.5px;line-height:14px;transform:scaleX(0.7910);color:#fff;">3</span>
<span class="t" style="left:87.50px;top:212.14px;font-size:12.5px;line-height:14px;transform:scaleX(0.8427);color:#fff;">Responsable Exento 1</span>
<span class="t" style="left:262.70px;top:212.14px;font-size:12.5px;line-height:14px;transform:scaleX(0.8260);color:#fff;">Domicilio 2</span>
<span class="t" style="left:398.50px;top:212.14px;font-size:12.5px;line-height:14px;transform:scaleX(0.8554);color:#fff;">FIRMAT</span>
<span class="t" style="left:76.20px;top:225.14px;font-size:12.5px;line-height:14px;transform:scaleX(0.7910);">4</span>
<span class="t" style="left:87.50px;top:225.14px;font-size:12.5px;line-height:14px;transform:scaleX(0.8426);">Responsable Inscripto 1</span>
<span class="t" style="left:262.70px;top:225.14px;font-size:12.5px;line-height:14px;transform:scaleX(0.8260);">Domicilio 3</span>
<span class="t" style="left:398.50px;top:225.14px;font-size:12.5px;line-height:14px;transform:scaleX(0.8554);">FIRMAT</span>
<span class="t" style="left:76.20px;top:238.14px;font-size:12.5px;line-height:14px;transform:scaleX(0.7910);">5</span>
<span class="t" style="left:87.50px;top:238.14px;font-size:12.5px;line-height:14px;transform:scaleX(0.8471);">Responsable Monotributo 1</span>
<span class="t" style="left:262.70px;top:238.14px;font-size:12.5px;line-height:14px;transform:scaleX(0.8260);">Domicilio 4</span>
<span class="t" style="left:398.50px;top:238.14px;font-size:12.5px;line-height:14px;transform:scaleX(0.8554);">FIRMAT</span>
<span class="t" style="left:76.20px;top:251.14px;font-size:12.5px;line-height:14px;transform:scaleX(0.7910);">6</span>
<span class="t" style="left:87.50px;top:251.14px;font-size:12.5px;line-height:14px;transform:scaleX(0.8466);">Responsable No Inscripto 1</span>
<span class="t" style="left:262.70px;top:251.14px;font-size:12.5px;line-height:14px;transform:scaleX(0.8260);">Domicilio 5</span>
<span class="t" style="left:398.50px;top:251.14px;font-size:12.5px;line-height:14px;transform:scaleX(0.8554);">FIRMAT</span>
<div style="left:47px;top:498px;width:712px;height:17px;background:#f7f7f7"></div>
<div class="btn" style="left:48px;top:498px;width:19px;height:17px;"></div>
<svg width="19" height="16" viewBox="0 0 19 16" style="left:48px;top:498px"><path d="M6 4h2v8H6zM13 4v8l-4-4z" fill="#000"/></svg>
<div class="btn" style="left:67px;top:498px;width:19px;height:17px;"></div>
<svg width="19" height="16" viewBox="0 0 19 16" style="left:67px;top:498px"><path d="M9 4v8l-4-4zM14 4v8l-4-4z" fill="#000"/></svg>
<div class="btn" style="left:86px;top:498px;width:19px;height:17px;"></div>
<svg width="19" height="16" viewBox="0 0 19 16" style="left:86px;top:498px"><path d="M12 4v8l-4-4z" fill="#000"/></svg>
<div class="btn" style="left:105px;top:498px;width:19px;height:17px;"></div>
<span class="t" style="left:111.50px;top:500.13px;font-size:11.5px;line-height:13px;transform:scaleX(0.9500);font-weight:bold;">?</span>
<div class="btn" style="left:124px;top:498px;width:19px;height:17px;"></div>
<svg width="19" height="16" viewBox="0 0 19 16" style="left:124px;top:498px"><path d="M8 4v8l4-4z" fill="#000"/></svg>
<div class="btn" style="left:143px;top:498px;width:19px;height:17px;"></div>
<svg width="19" height="16" viewBox="0 0 19 16" style="left:143px;top:498px"><path d="M5 4v8l4-4zM10 4v8l4-4z" fill="#000"/></svg>
<div class="btn" style="left:162px;top:498px;width:19px;height:17px;"></div>
<svg width="19" height="16" viewBox="0 0 19 16" style="left:162px;top:498px"><path d="M12 4h2v8h-2zM7 4v8l4-4z" fill="#000"/></svg>
<div style="left:181px;top:498px;width:19px;height:17px;background:#c8c8c8"></div>
<div class="btn" style="left:200px;top:498px;width:17px;height:17px;"></div>
<svg width="17" height="16" viewBox="0 0 17 16" style="left:200px;top:498px"><path d="M10 4v8l-4-4z" fill="#000"/></svg>
<div class="btn" style="left:217px;top:498px;width:17px;height:17px;"></div>
<span class="t" style="left:47.70px;top:520.64px;font-size:12.5px;line-height:14px;transform:scaleX(0.8297);">Cantidad de Registros:</span>
<span class="t" style="left:194.50px;top:520.64px;font-size:12.5px;line-height:14px;transform:scaleX(0.7910);">6</span>
<div style="left:267px;top:522px;width:30px;height:17px;background:#fff;border:1px solid #000;box-shadow:1.500px 1.500px 0 #6a6a6a"></div>
<svg width="30" height="17" viewBox="267 522 30 17" style="left:267px;top:522px"><path d="M269 524.500h3M273 524.500h1M269 526.500h5" stroke="#9a9a9a" stroke-width="1"/><path d="M275 530.500h7M283.500 530.500h5.500M275 532.500h4M282 532.500h3M286 532.500h2.500M284 534.500h4.500" stroke="#000" stroke-width="1.100"/><rect x="291" y="524.200" width="3.700" height="4" fill="#27c043"/><rect x="291.500" y="524.200" width="2.700" height="1.200" fill="#7fd4ee"/></svg>
<div class="btn" style="left:425px;top:522px;width:100px;height:22px;"></div>
<svg width="14" height="14" viewBox="0 0 14 14" style="left:429px;top:525px"><circle cx="7" cy="7" r="7" fill="#4a86e0"/><circle cx="7" cy="7" r="6.200" fill="none" stroke="#7fb0f0" stroke-width=".8"/><text x="7" y="11.300" text-anchor="middle" font-family="Liberation Sans, sans-serif" font-weight="bold" font-size="12" fill="#fff" stroke="#fff" stroke-width=".3">?</text></svg>
<span class="t" style="left:452.50px;top:526.14px;font-size:12.5px;line-height:14px;transform:scaleX(0.8224);"><u>C</u>onsultar</span>
<div style="left:41px;top:545px;width:722px;height:1px;background:#808080"></div>
<div style="left:41px;top:546px;width:722px;height:1px;background:#a0a0a0"></div>
<div style="left:41px;top:547px;width:722px;height:1px;background:#fff"></div>
<div class="btn" style="left:41px;top:550px;width:78px;height:23px;"></div>
<svg width="16" height="14" viewBox="0 0 16 14" style="left:44px;top:554px"><rect x=".5" y=".5" width="11" height="12" fill="#fff" stroke="#8a9bb5"/><rect x="1" y="1" width="10" height="2.500" fill="#6f9fe0"/><path d="M1 6.500h10M1 9.500h10M4.500 3.500v9M8 3.500v9" stroke="#b9c4d6" stroke-width="1"/><path d="M7 6.500h5v-2.500l4 3.500-4 3.500v-2.500H7z" fill="#e23a2e"/></svg>
<span class="t" style="left:68.50px;top:555.14px;font-size:12.5px;line-height:14px;transform:scaleX(0.8254);">E<u>x</u>portar</span>
<div style="left:468px;top:214px;width:731px;height:410px;background:linear-gradient(#8fb0d6 0,#9dbadb 4px,#b0c8e4 13px,#c9dbee 25px,#f4f6fa 26px,#f6f8fb 100%);border:1px solid;border-color:#0f1b27;border-radius:6px 6px 0 0;box-shadow:inset 0 1px 0 rgba(255,255,255,.9),inset 1px 0 0 rgba(255,255,255,.55),inset -1px 0 0 #70d2f4,inset -2px 0 0 #8fdcf6,inset 0 -1px 0 #a4e1f7,inset 0 -2px 0 #d3effb"></div>
<div style="left:472px;top:239px;width:723px;height:381px;background:#f0f0f0"></div>
<svg width="15" height="13" viewBox="0 0 15 13" style="left:473.5px;top:220.5px">
<path d="M1.300 .5h2.400v12H1.300zM8.300 1.300h2.400v11.200H8.300z" fill="#3d0a14"/><path d="M4.800 3h2.400v9.500H4.800zM11.800 4h2.400v8.500h-2.400z" fill="#5b1036"/>
<path d="M2.900 .5h.8v12h-.8zM6.400 3h.8v9.500h-.8zM9.900 1.300h.8v11.200h-.8zM13.400 4h.8v8.500h-.8z" fill="#a436b4"/>
<path d="M.3 10.500L4 6.800l2 1.500 3-4.300 2.500 1.800L14.700 4" fill="none" stroke="#f6c21a" stroke-width="1.300"/><path d="M0 12.500h15M.5 0v12.500" stroke="#3a3a3a" stroke-width="1" stroke-opacity=".8"/></svg>
<span class="t" style="left:493.30px;top:220.64px;font-size:12.4px;line-height:14px;transform:scaleX(0.9543);color:#000;">Actualizando un registro de Clientes</span>
<svg width="31" height="17" viewBox="0 0 31 17" style="left:1163px;top:219px"><defs><linearGradient id="cbA" x1="0" y1="0" x2="0" y2="1"><stop offset="0" stop-color="#c6d8ee"/><stop offset=".48" stop-color="#bdd2ea"/><stop offset=".52" stop-color="#a6c1e0"/><stop offset="1" stop-color="#b4cbe6"/></linearGradient></defs>
<rect x=".5" y=".5" width="30" height="15.500" rx="2.500" fill="url(#cbA)" stroke="#dbe7f5"/>
<path d="M10 4h3.300l2.200 2.300 2.200-2.300H21l-3.700 4.300 3.700 4.300h-3.300l-2.200-2.300-2.200 2.300H10l3.700-4.300z" fill="#f6f8fb" stroke="#3b4552" stroke-width="1.100" stroke-linejoin="round"/></svg>
<div style="left:1195px;top:239px;width:1px;height:382px;background:#fff"></div>
<div style="left:474px;top:620px;width:722px;height:1px;background:#fff"></div>
<div style="left:474px;top:263px;width:719px;height:325px;border:1px solid;border-color:#fff #696969 #696969 #fff;box-shadow:inset -1px -1px 0 #a0a0a0"></div>
<div style="left:597px;top:245px;width:92px;height:18px;border-top:1px solid #fff;border-left:1px solid #fff;border-right:1px solid #696969;box-shadow:inset -1px 0 0 #a0a0a0;background:#f0f0f0;border-radius:2px 2px 0 0"></div>
<span class="t" style="left:599.30px;top:247.84px;font-size:12.5px;line-height:14px;transform:scaleX(0.8553);">Datos Adicionales</span>
<div style="left:691px;top:245px;width:88px;height:18px;border-top:1px solid #fff;border-left:1px solid #fff;border-right:1px solid #696969;box-shadow:inset -1px 0 0 #a0a0a0;background:#f0f0f0;border-radius:2px 2px 0 0"></div>
<span class="t" style="left:694.00px;top:247.84px;font-size:12.5px;line-height:14px;transform:scaleX(0.8298);">Cuenta Corriente</span>
<div style="left:780px;top:245px;width:37px;height:18px;border-top:1px solid #fff;border-left:1px solid #fff;border-right:1px solid #696969;box-shadow:inset -1px 0 0 #a0a0a0;background:#f0f0f0;border-radius:2px 2px 0 0"></div>
<span class="t" style="left:783.60px;top:247.84px;font-size:12.5px;line-height:14px;transform:scaleX(0.8482);">Notas</span>
<div style="left:474px;top:242px;width:123px;height:22px;border-top:1px solid #fff;border-left:1px solid #fff;border-right:1px solid #696969;box-shadow:inset -1px 0 0 #a0a0a0;background:#f0f0f0;border-radius:2px 2px 0 0"></div>
<span class="t" style="left:480.60px;top:245.64px;font-size:12.5px;line-height:14px;transform:scaleX(0.8555);">Datos de Identificación</span>
<span class="t" style="left:486.50px;top:273.14px;font-size:12.5px;line-height:14px;transform:scaleX(0.8122);">Código:</span>
<span class="t" style="left:611.00px;top:273.14px;font-size:12.5px;line-height:14px;transform:scaleX(0.7910);">3</span>
<div class="chk" style="left:755px;top:274px;width:13px;height:13px;"></div>
<span class="t" style="left:774.50px;top:273.64px;font-size:12.5px;line-height:14px;transform:scaleX(0.8380);">Cliente y Proveedor</span>
<div class="chk" style="left:885px;top:274px;width:13px;height:13px;"></div>
<span class="t" style="left:903.50px;top:273.64px;font-size:12.5px;line-height:14px;transform:scaleX(0.8429);">Moroso?</span>
<div class="chk" style="left:995px;top:274px;width:13px;height:13px;"></div>
<span class="t" style="left:1014.00px;top:273.64px;font-size:12.5px;line-height:14px;transform:scaleX(0.8795);">Inactivo?</span>
<span class="t" style="left:486.80px;top:294.14px;font-size:12.5px;line-height:14px;transform:scaleX(0.8344);">Nombre:</span>
<div class="sunk yel" style="left:572px;top:293px;width:285px;height:16px;"></div>
<span class="t" style="left:486.80px;top:314.14px;font-size:12.5px;line-height:14px;transform:scaleX(0.8120);">Domicilio:</span>
<div class="sunk yel" style="left:572px;top:313px;width:285px;height:16px;"></div>
<span class="t" style="left:486.80px;top:333.14px;font-size:12.5px;line-height:14px;transform:scaleX(0.8240);">Código Postal:</span>
<div class="sunk yel" style="left:572px;top:332px;width:64px;height:16px;"></div>
<span class="t" style="left:486.80px;top:353.14px;font-size:12.5px;line-height:14px;transform:scaleX(0.8574);">Teléfono:</span>
<div class="sunk yel" style="left:572px;top:352px;width:132px;height:16px;"></div>
<span class="t" style="left:486.80px;top:372.14px;font-size:12.5px;line-height:14px;transform:scaleX(0.8574);">Teléfono:</span>
<div class="sunk" style="left:572px;top:371px;width:132px;height:16px;"></div>
<span class="t" style="left:486.80px;top:392.14px;font-size:12.5px;line-height:14px;transform:scaleX(0.7815);">Fax:</span>
<div class="sunk" style="left:572px;top:391px;width:132px;height:16px;"></div>
<span class="t" style="left:486.80px;top:411.14px;font-size:12.5px;line-height:14px;transform:scaleX(0.8133);">Propietario:</span>
<div class="sunk" style="left:572px;top:410px;width:132px;height:16px;"></div>
<span class="t" style="left:486.80px;top:431.14px;font-size:12.5px;line-height:14px;transform:scaleX(0.8225);">Enc. Compras:</span>
<div class="sunk" style="left:572px;top:430px;width:132px;height:16px;"></div>
<span class="t" style="left:486.80px;top:450.14px;font-size:12.5px;line-height:14px;transform:scaleX(0.8456);">Enc. Pagos:</span>
<div class="sunk" style="left:572px;top:449px;width:132px;height:16px;"></div>
<span class="t" style="left:486.80px;top:470.14px;font-size:12.5px;line-height:14px;transform:scaleX(0.8104);">Email Cliente:</span>
<div class="sunk" style="left:572px;top:469px;width:132px;height:16px;"></div>
<span class="t" style="left:486.80px;top:489.14px;font-size:12.5px;line-height:14px;transform:scaleX(0.8509);">I.V.A.:</span>
<div class="sunk yel" style="left:572px;top:488px;width:31px;height:16px;"></div>
<span class="t" style="left:486.80px;top:509.14px;font-size:12.5px;line-height:14px;transform:scaleX(0.8637);">C.U.I.T.:</span>
<div class="sunk" style="left:572px;top:508px;width:96px;height:16px;"></div>
<div style="left:576px;top:295px;width:108px;height:13px;background:#3399ff"></div>
<span class="t" style="left:577.00px;top:295.14px;font-size:12.5px;line-height:14px;transform:scaleX(0.8388);color:#fff;">Responsable Exento 1</span>
<div style="left:683px;top:295px;width:1px;height:13px;background:#000"></div>
<span class="t" style="left:577.00px;top:315.14px;font-size:12.5px;line-height:14px;transform:scaleX(0.8341);">Domicilio 2</span>
<span class="t" style="left:588.50px;top:334.14px;font-size:12.5px;line-height:14px;transform:scaleX(0.8234);">2630-001</span>
<svg width="14" height="14" viewBox="0 0 14 14" style="left:643px;top:332px"><circle cx="7" cy="7" r="7" fill="#4a86e0"/><circle cx="7" cy="7" r="6.200" fill="none" stroke="#7fb0f0" stroke-width=".8"/><text x="7" y="11.300" text-anchor="middle" font-family="Liberation Sans, sans-serif" font-weight="bold" font-size="12" fill="#fff" stroke="#fff" stroke-width=".3">?</text></svg>
<span class="t" style="left:667.80px;top:333.63px;font-size:11.3px;line-height:13px;transform:scaleX(0.8720);">F2</span>
<span class="t" style="left:684.50px;top:333.63px;font-size:11.3px;line-height:13px;transform:scaleX(0.9340);">FIRMAT</span>
<span class="t" style="left:635.80px;top:354.14px;font-size:12.5px;line-height:14px;transform:scaleX(0.8433);">03465421001</span>
<span class="t" style="left:708.50px;top:411.14px;font-size:12.5px;line-height:14px;transform:scaleX(0.7893);">Celular:</span>
<div class="sunk" style="left:749px;top:410px;width:93px;height:16px;"></div>
<span class="t" style="left:708.50px;top:431.14px;font-size:12.5px;line-height:14px;transform:scaleX(0.7893);">Celular:</span>
<div class="sunk" style="left:749px;top:430px;width:93px;height:16px;"></div>
<span class="t" style="left:708.50px;top:450.14px;font-size:12.5px;line-height:14px;transform:scaleX(0.7893);">Celular:</span>
<div class="sunk" style="left:749px;top:449px;width:93px;height:16px;"></div>
<svg width="24" height="17" viewBox="709 472 24 17" style="left:709px;top:472px"><rect x="709.300" y="472.800" width="20.700" height="13.700" fill="#a8d4f8"/><path d="M711 475.500h9M711 477.500h6M711.500 479.500h11.500M712 481.500h12M711.500 483.500h4.500M718 483.500h6" stroke="#2f6fc2" stroke-width="1.100"/><rect x="724" y="474" width="4.200" height="4.200" fill="#2389ea"/><path d="M717.500 487h13.500M725.500 481.500l5.500 5.500" stroke="#3a8ee6" stroke-width="2" stroke-linecap="round" fill="none"/></svg>
<div class="chk" style="left:749px;top:471px;width:13px;height:13px;"></div>
<span class="t" style="left:767.70px;top:470.64px;font-size:12.5px;line-height:14px;transform:scaleX(0.8413);">No Envia Emails?</span>
<span class="t" style="left:593.00px;top:490.14px;font-size:12.5px;line-height:14px;transform:scaleX(0.7910);">5</span>
<svg width="14" height="14" viewBox="0 0 14 14" style="left:610px;top:490px"><circle cx="7" cy="7" r="7" fill="#4a86e0"/><circle cx="7" cy="7" r="6.200" fill="none" stroke="#7fb0f0" stroke-width=".8"/><text x="7" y="11.300" text-anchor="middle" font-family="Liberation Sans, sans-serif" font-weight="bold" font-size="12" fill="#fff" stroke="#fff" stroke-width=".3">?</text></svg>
<span class="t" style="left:634.40px;top:491.93px;font-size:11.3px;line-height:13px;transform:scaleX(0.8720);">F3</span>
<span class="t" style="left:654.70px;top:490.33px;font-size:11.3px;line-height:13px;transform:scaleX(0.9351);">Responsable Exento</span>
<span class="t" style="left:594.00px;top:510.14px;font-size:12.5px;line-height:14px;transform:scaleX(0.8432);">00-00000000-0</span>
<span class="t" style="left:486.50px;top:528.14px;font-size:12.5px;line-height:14px;transform:scaleX(0.8351);">Saldo de Cuenta Corriente:</span>
<span class="t" style="left:693.50px;top:528.14px;font-size:12.5px;line-height:14px;transform:scaleX(0.8631);">$0.00</span>
<div class="grp" style="left:876px;top:320px;width:315px;height:147px;"></div>
<div style="left:882.5px;top:314px;width:132px;height:12px;background:#f0f0f0"></div>
<span class="t" style="left:886.00px;top:314.14px;font-size:12.5px;line-height:14px;transform:scaleX(0.8281);">Datos de Comercialización:</span>
<span class="t" style="left:881.70px;top:328.14px;font-size:12.5px;line-height:14px;transform:scaleX(0.8432);">Condición de Pago:</span>
<div class="sunk yel" style="left:985px;top:327px;width:37px;height:16px;"></div>
<span class="t" style="left:1012.50px;top:329.14px;font-size:12.5px;line-height:14px;transform:scaleX(0.7910);">2</span>
<svg width="14" height="14" viewBox="0 0 14 14" style="left:1028px;top:328px"><circle cx="7" cy="7" r="7" fill="#4a86e0"/><circle cx="7" cy="7" r="6.200" fill="none" stroke="#7fb0f0" stroke-width=".8"/><text x="7" y="11.300" text-anchor="middle" font-family="Liberation Sans, sans-serif" font-weight="bold" font-size="12" fill="#fff" stroke="#fff" stroke-width=".3">?</text></svg>
<span class="t" style="left:1050.50px;top:328.63px;font-size:11.3px;line-height:13px;transform:scaleX(0.8720);">F5</span>
<span class="t" style="left:1067.50px;top:328.63px;font-size:11.3px;line-height:13px;transform:scaleX(0.9275);">Cuenta Corriente 15 Dia</span>
<span class="t" style="left:881.70px;top:346.14px;font-size:12.5px;line-height:14px;transform:scaleX(0.8915);">Zona:</span>
<div class="sunk" style="left:985px;top:345px;width:37px;height:16px;"></div>
<span class="t" style="left:1012.50px;top:347.14px;font-size:12.5px;line-height:14px;transform:scaleX(0.7910);">0</span>
<svg width="14" height="14" viewBox="0 0 14 14" style="left:1028px;top:346px"><circle cx="7" cy="7" r="7" fill="#4a86e0"/><circle cx="7" cy="7" r="6.200" fill="none" stroke="#7fb0f0" stroke-width=".8"/><text x="7" y="11.300" text-anchor="middle" font-family="Liberation Sans, sans-serif" font-weight="bold" font-size="12" fill="#fff" stroke="#fff" stroke-width=".3">?</text></svg>
<span class="t" style="left:1050.50px;top:346.63px;font-size:11.3px;line-height:13px;transform:scaleX(0.8720);">F6</span>
<span class="t" style="left:881.70px;top:366.14px;font-size:12.5px;line-height:14px;transform:scaleX(0.8426);">Transportista:</span>
<div class="sunk" style="left:985px;top:365px;width:37px;height:16px;"></div>
<span class="t" style="left:1012.50px;top:367.14px;font-size:12.5px;line-height:14px;transform:scaleX(0.7910);">0</span>
<svg width="14" height="14" viewBox="0 0 14 14" style="left:1028px;top:366px"><circle cx="7" cy="7" r="7" fill="#4a86e0"/><circle cx="7" cy="7" r="6.200" fill="none" stroke="#7fb0f0" stroke-width=".8"/><text x="7" y="11.300" text-anchor="middle" font-family="Liberation Sans, sans-serif" font-weight="bold" font-size="12" fill="#fff" stroke="#fff" stroke-width=".3">?</text></svg>
<span class="t" style="left:1050.50px;top:366.63px;font-size:11.3px;line-height:13px;transform:scaleX(0.8720);">F7</span>
<span class="t" style="left:881.70px;top:385.14px;font-size:12.5px;line-height:14px;transform:scaleX(0.8276);">Rubro Comercial:</span>
<div class="sunk yel" style="left:985px;top:384px;width:37px;height:16px;"></div>
<span class="t" style="left:1012.50px;top:386.14px;font-size:12.5px;line-height:14px;transform:scaleX(0.7910);">1</span>
<svg width="14" height="14" viewBox="0 0 14 14" style="left:1028px;top:385px"><circle cx="7" cy="7" r="7" fill="#4a86e0"/><circle cx="7" cy="7" r="6.200" fill="none" stroke="#7fb0f0" stroke-width=".8"/><text x="7" y="11.300" text-anchor="middle" font-family="Liberation Sans, sans-serif" font-weight="bold" font-size="12" fill="#fff" stroke="#fff" stroke-width=".3">?</text></svg>
<span class="t" style="left:1050.50px;top:385.63px;font-size:11.3px;line-height:13px;transform:scaleX(0.8720);">F8</span>
<span class="t" style="left:1067.50px;top:385.63px;font-size:11.3px;line-height:13px;transform:scaleX(0.9328);">Rubro 1</span>
<span class="t" style="left:881.70px;top:405.14px;font-size:12.5px;line-height:14px;transform:scaleX(0.8336);">Categoría Cliente:</span>
<div class="sunk" style="left:985px;top:404px;width:37px;height:16px;"></div>
<span class="t" style="left:989.50px;top:406.14px;font-size:12.5px;line-height:14px;transform:scaleX(0.8629);">10</span>
<div style="left:1009px;top:406px;width:11px;height:6px;background:#f0f0f0;border:1px solid;border-color:#fff #696969 #696969 #fff"></div>
<div style="left:1009px;top:412px;width:11px;height:6px;background:#f0f0f0;border:1px solid;border-color:#fff #696969 #696969 #fff"></div>
<svg width="11" height="12" viewBox="0 0 11 12" style="left:1009px;top:406px"><path d="M5.500 1l3 3.500h-6zM5.500 11l3-3.500h-6z" fill="#000"/></svg>
<span class="t" style="left:881.70px;top:424.14px;font-size:12.5px;line-height:14px;transform:scaleX(0.8166);">Limite de Crédito:</span>
<div class="sunk" style="left:985px;top:423px;width:84px;height:16px;"></div>
<span class="t" style="left:1038.20px;top:425.14px;font-size:12.5px;line-height:14px;transform:scaleX(0.8631);">$0.00</span>
<span class="t" style="left:882.40px;top:443.64px;font-size:12.5px;line-height:14px;transform:scaleX(0.8466);">Fecha de Ultima Venta:</span>
<div class="btn" style="left:1106px;top:434px;width:78px;height:20px;"></div>
<span class="t" style="left:1118.00px;top:436.74px;font-size:12.5px;line-height:14px;transform:scaleX(0.8511);">Reprocesar</span>
<div class="grp" style="left:876px;top:479px;width:212px;height:71px;"></div>
<div style="left:882.5px;top:473px;width:65px;height:12px;background:#f0f0f0"></div>
<span class="t" style="left:885.50px;top:472.64px;font-size:12.5px;line-height:14px;transform:scaleX(0.8491);">Descuentos:</span>
<span class="t" style="left:882.40px;top:489.14px;font-size:12.5px;line-height:14px;transform:scaleX(0.8564);">1º Descuento:</span>
<div class="sunk" style="left:953px;top:488px;width:72px;height:16px;"></div>
<span class="t" style="left:992.40px;top:490.14px;font-size:12.5px;line-height:14px;transform:scaleX(0.8180);">%0.00</span>
<span class="t" style="left:882.40px;top:507.14px;font-size:12.5px;line-height:14px;transform:scaleX(0.8564);">2º Descuento:</span>
<div class="sunk" style="left:953px;top:506px;width:72px;height:16px;"></div>
<span class="t" style="left:992.40px;top:508.14px;font-size:12.5px;line-height:14px;transform:scaleX(0.8180);">%0.00</span>
<span class="t" style="left:882.40px;top:528.14px;font-size:12.5px;line-height:14px;transform:scaleX(0.8564);">3º Descuento:</span>
<div class="sunk" style="left:953px;top:527px;width:72px;height:16px;"></div>
<span class="t" style="left:992.40px;top:529.14px;font-size:12.5px;line-height:14px;transform:scaleX(0.8180);">%0.00</span>
<div style="left:1023px;top:593px;width:81px;height:23px;border:1px solid #4a4a4a;background:#f0f0f0"></div>
<div class="btn" style="left:1024px;top:594px;width:79px;height:21px;"></div>
<svg width="15" height="15" viewBox="0 0 15 15" style="left:1026.500px;top:596.500px"><circle cx="7.500" cy="7.500" r="7.500" fill="#3fb894"/><path d="M3.800 7.800l2.500 2.500 4.800-5" fill="none" stroke="#fff" stroke-width="2" stroke-linecap="round" stroke-linejoin="round"/></svg>
<span class="t" style="left:1050.00px;top:597.84px;font-size:12.5px;line-height:14px;transform:scaleX(0.8581);"><u>O</u>K</span>
<div class="btn" style="left:1110px;top:593px;width:81px;height:23px;"></div>
<svg width="15" height="15" viewBox="0 0 15 15" style="left:1113.500px;top:596.500px"><circle cx="7.500" cy="7.500" r="7.500" fill="#e0485c"/><path d="M4.500 4.500l6 6M10.500 4.500l-6 6" fill="none" stroke="#fff" stroke-width="2.200" stroke-linecap="round"/></svg>
<span class="t" style="left:1137.50px;top:597.84px;font-size:12.5px;line-height:14px;transform:scaleX(0.8295);"><u>C</u>ancelar</span>
</div>
</body></html>
